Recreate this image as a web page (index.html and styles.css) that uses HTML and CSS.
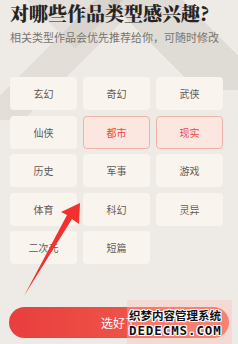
FILE: index.html
```html
<!DOCTYPE html>
<html lang="zh">
<head>
<meta charset="utf-8">
<link rel="stylesheet" href="styles.css">
</head>
<body>
<div class="page">
  <div class="deco"></div>
  <h1 class="title">对哪些作品类型感兴趣?</h1>
  <p class="subtitle">相关类型作品会优先推荐给你，可随时修改</p>
  <div class="grid">
    <div class="tag">玄幻</div>
    <div class="tag">奇幻</div>
    <div class="tag">武侠</div>
    <div class="tag">仙侠</div>
    <div class="tag on">都市</div>
    <div class="tag on">现实</div>
    <div class="tag">历史</div>
    <div class="tag">军事</div>
    <div class="tag">游戏</div>
    <div class="tag">体育</div>
    <div class="tag">科幻</div>
    <div class="tag">灵异</div>
    <div class="tag">二次元</div>
    <div class="tag">短篇</div>
  </div>
  <div class="btn">选好了</div>
  <svg class="arrow" width="238" height="344" viewBox="0 0 238 344">
    <polygon points="80,203 61,212 67,215 24,296 72,219 79,224" fill="#f2302e"/>
  </svg>
  <div class="wm">
    <div class="wm-cn">织梦内容管理系统</div>
    <div class="wm-en">DEDECMS.COM</div>
  </div>
</div>
</body>
</html>
```
FILE: styles.css
```css
html, body {
  margin: 0;
  padding: 0;
}
body {
  width: 238px;
  height: 344px;
  overflow: hidden;
  background: #eeeae5;
  font-family: "Noto Sans CJK SC", "Noto Sans", sans-serif;
}
.page {
  position: relative;
  width: 238px;
  height: 344px;
  overflow: hidden;
  background:
    linear-gradient(135deg, rgba(0,0,0,0) 40%, rgba(120,110,100,0.10) 40%, rgba(120,110,100,0.10) 60%, rgba(0,0,0,0) 60%) 0 0 / 120px 120px no-repeat,
    linear-gradient(45deg, rgba(0,0,0,0) 35%, rgba(120,110,100,0.12) 35%, rgba(120,110,100,0.12) 65%, rgba(0,0,0,0) 65%) 110px -20px / 140px 110px no-repeat,
    #eeeae5;
}
.deco {
  position: absolute;
  left: 30px;
  top: -60px;
  width: 90px;
  height: 90px;
  transform: rotate(45deg);
  background: rgba(110,100,90,0.08);
}
.title {
  position: relative;
  margin: 0;
  padding: 0 0 0 10px;
  font-size: 19px;
  line-height: 26px;
  font-weight: 900;
  color: #262422;
  white-space: nowrap;
  font-family: "Noto Serif CJK SC", "Noto Sans CJK SC", serif;
}
.subtitle {
  position: relative;
  margin: 4px 0 0 0;
  padding-left: 10px;
  font-size: 11px;
  line-height: 14px;
  color: #787470;
  white-space: nowrap;
}
.grid {
  position: relative;
  margin: 33px 0 0 10px;
  display: grid;
  grid-template-columns: repeat(3, 67px);
  grid-auto-rows: 33px;
  column-gap: 6px;
  row-gap: 5.5px;
}
.tag {
  display: flex;
  align-items: center;
  justify-content: center;
  background: #faf4ee;
  border-radius: 4px;
  font-size: 10px;
  color: #5e5a57;
  box-sizing: border-box;
}
.tag.on {
  background: #fbe6e0;
  border: 1px solid #f1b1ab;
  color: #ea4a48;
}
.btn {
  position: relative;
  margin: 43px 0 0 9px;
  width: 220px;
  height: 31px;
  border-radius: 16px;
  background: linear-gradient(90deg, #e93e3e, #f2644f);
  color: #fff;
  font-size: 12px;
  display: flex;
  align-items: center;
  justify-content: center;
}
.arrow {
  position: absolute;
  left: 0;
  top: 0;
}
.wm {
  position: absolute;
  left: 127px;
  top: 300px;
  width: 105px;
  height: 44px;
  padding-top: 9px;
  box-sizing: border-box;
  background: rgba(255,190,180,0.35);
}
.wm-cn {
  font-size: 11.5px;
  line-height: 13px;
  font-weight: 700;
  color: #111;
  padding-left: 2px;
  white-space: nowrap;
  text-shadow: 1px 0 0 #fff, -1px 0 0 #fff, 0 1px 0 #fff, 0 -1px 0 #fff, 1px 1px 0 #fff, -1px -1px 0 #fff, 1px -1px 0 #fff, -1px 1px 0 #fff;
}
.wm-en {
  margin-top: 2px;
  font-family: "DejaVu Sans Mono", "Liberation Mono", monospace;
  font-size: 12.5px;
  line-height: 13px;
  font-weight: 700;
  color: #111;
  padding-left: 2px;
  letter-spacing: 0.9px;
  white-space: nowrap;
  text-shadow: 1px 0 0 #fff, -1px 0 0 #fff, 0 1px 0 #fff, 0 -1px 0 #fff, 1px 1px 0 #fff, -1px -1px 0 #fff, 1px -1px 0 #fff, -1px 1px 0 #fff;
}
```
